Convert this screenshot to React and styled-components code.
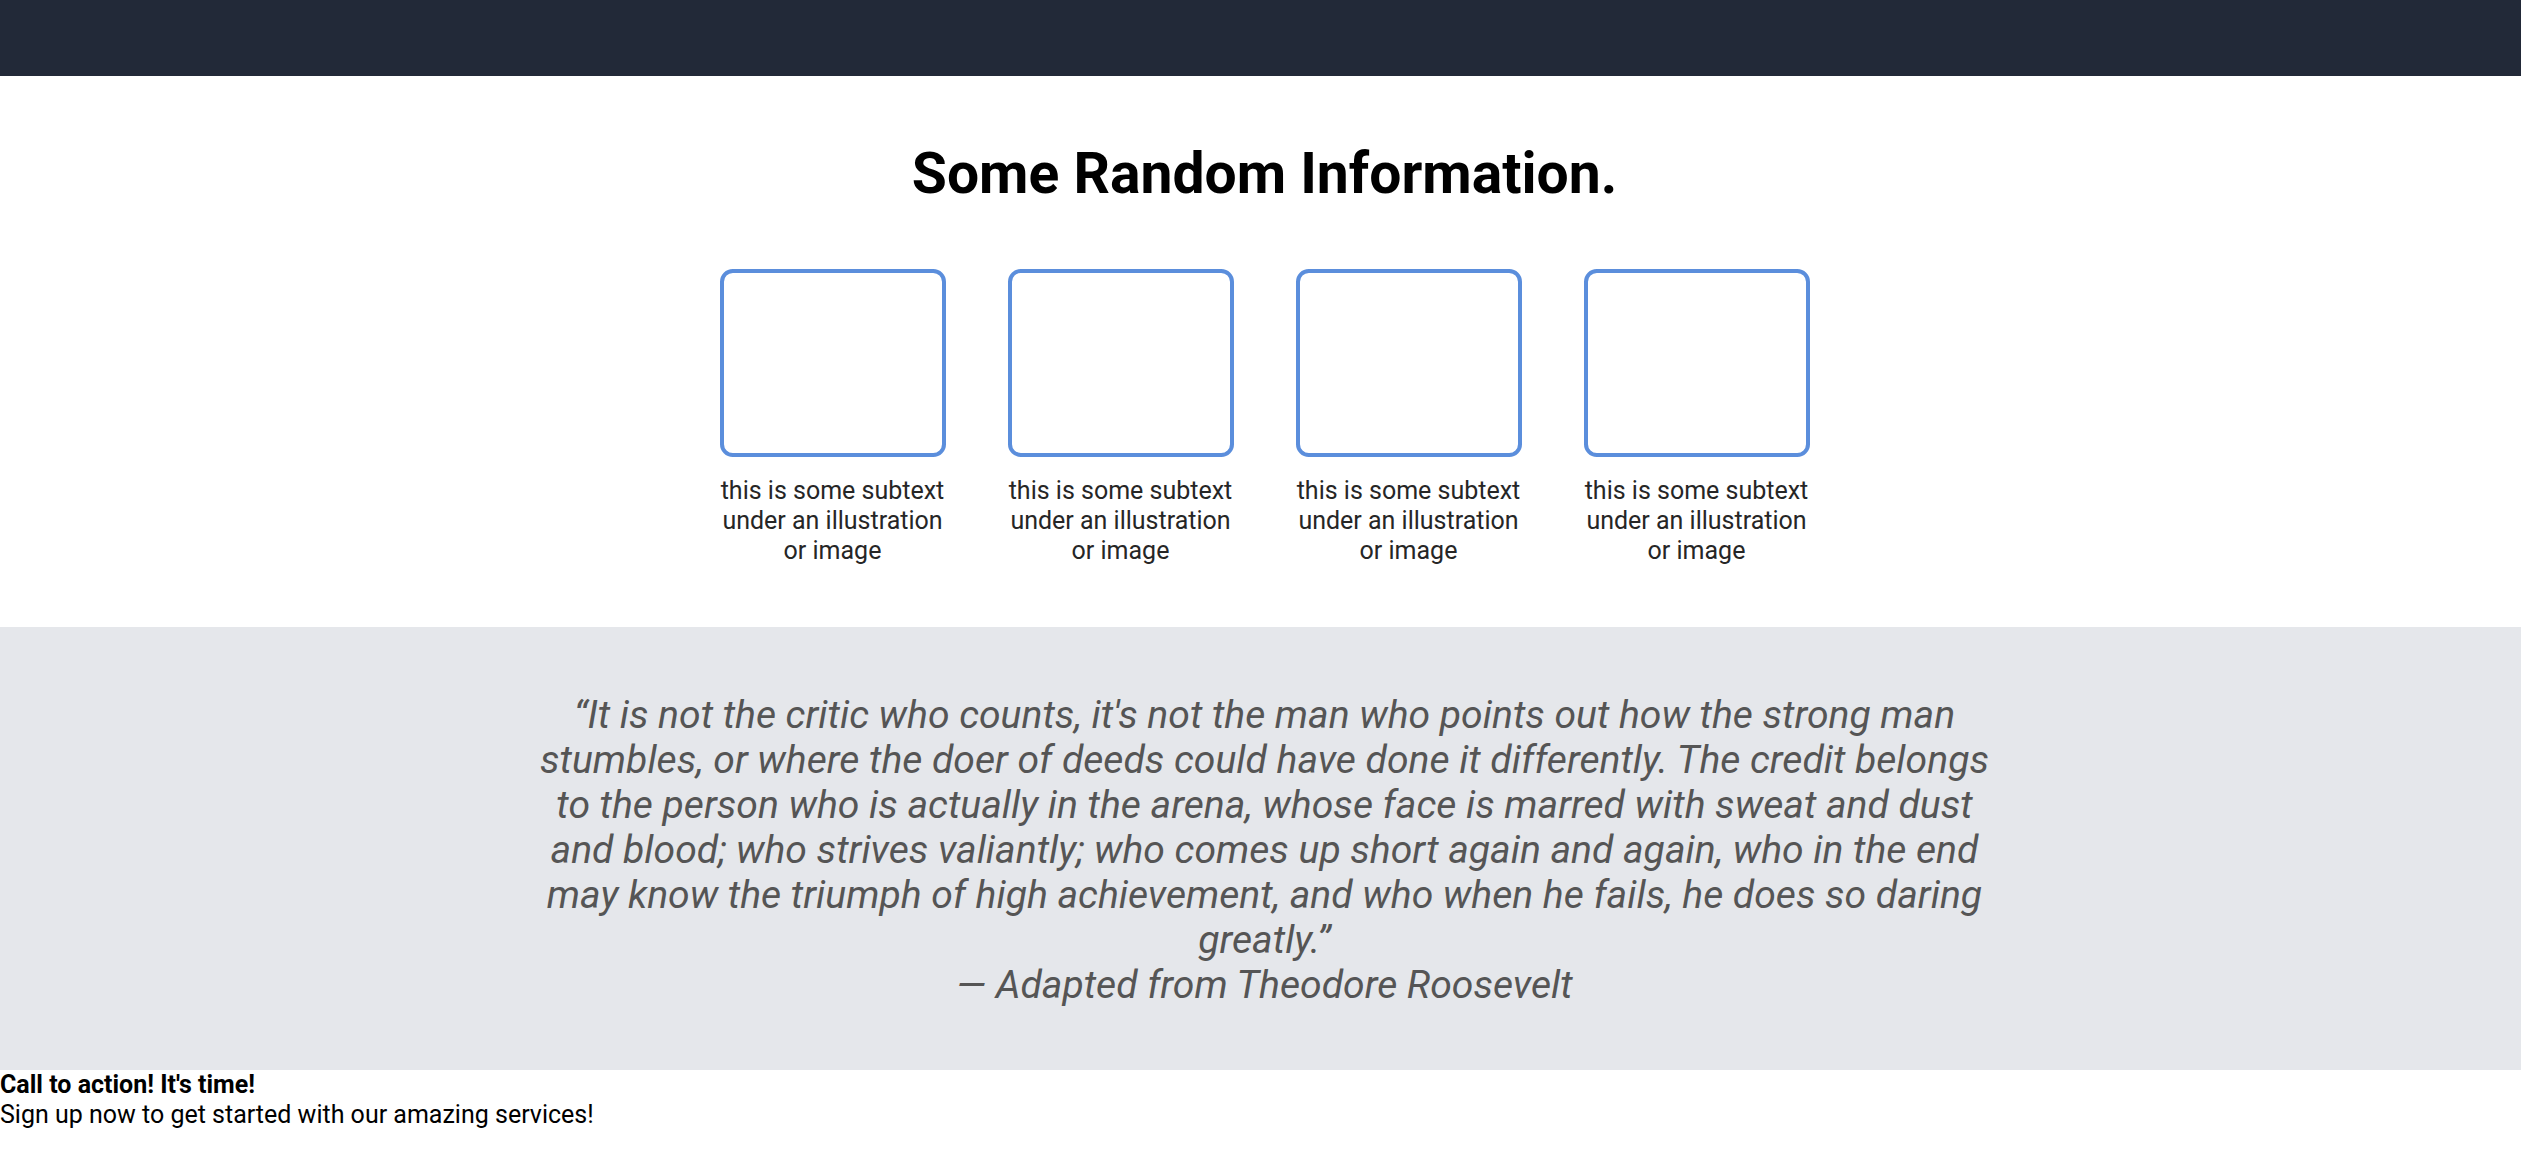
import React from 'react';
import styled, { createGlobalStyle } from 'styled-components';

const GlobalStyle = createGlobalStyle`
  body {
    margin: 0;
    font-family: Roboto, "Liberation Sans", sans-serif;
    background: #fff;
  }
`;

const Header = styled.header`
  height: 76px;
  background-color: #222938;
`;

const InfoSection = styled.section`
  display: flex;
  flex-direction: column;
  align-items: center;
  padding: 64px 0 61px 8px;
`;

const Heading = styled.h1`
  margin: 0 0 62px;
  font-size: 57px;
  font-weight: 700;
  color: #000;
`;

const Cards = styled.div`
  display: flex;
  gap: 62px;
`;

const Card = styled.div`
  width: 226px;
  display: flex;
  flex-direction: column;
  align-items: center;
`;

const Picture = styled.div`
  box-sizing: border-box;
  width: 226px;
  height: 188px;
  border: 4.8px solid #5b8edc;
  border-radius: 12.8px;
`;

const Subtext = styled.p`
  margin: 19px 0 0;
  font-size: 25px;
  line-height: 30px;
  color: #262626;
  text-align: center;
  white-space: nowrap;
`;

const QuoteSection = styled.section`
  background-color: #e5e7eb;
  padding: 66px 0 62px 8px;
  display: flex;
  justify-content: center;
`;

const Quote = styled.blockquote`
  margin: 0;
  width: 1462px;
  font-size: 39.1px;
  line-height: 45px;
  font-style: italic;
  font-weight: 400;
  color: #555;
  text-align: center;
`;

const Author = styled.span`
  display: block;
`;

const Cta = styled.section`
  font-size: 25px;
  line-height: 30px;
  color: #000;
`;

const CtaTitle = styled.div`
  font-weight: 700;
`;

const cards = [1, 2, 3, 4];

export default function App() {
  return (
    <>
      <GlobalStyle />
      <Header />
      <InfoSection>
        <Heading>Some Random Information.</Heading>
        <Cards>
          {cards.map((n) => (
            <Card key={n}>
              <Picture />
              <Subtext>
                this is some subtext
                <br />
                under an illustration
                <br />
                or image
              </Subtext>
            </Card>
          ))}
        </Cards>
      </InfoSection>
      <QuoteSection>
        <Quote>
          “It is not the critic who counts, it's not the man who points out how the strong man stumbles, or where the doer of deeds could have done it differently. The credit belongs to the person who is actually in the arena, whose face is marred with sweat and dust and blood; who strives valiantly; who comes up short again and again, who in the end may know the triumph of high achievement, and who when he fails, he does so daring greatly.”
          <Author>— Adapted from Theodore Roosevelt</Author>
        </Quote>
      </QuoteSection>
      <Cta>
        <CtaTitle>Call to action! It's time!</CtaTitle>
        <div>Sign up now to get started with our amazing services!</div>
      </Cta>
    </>
  );
}
